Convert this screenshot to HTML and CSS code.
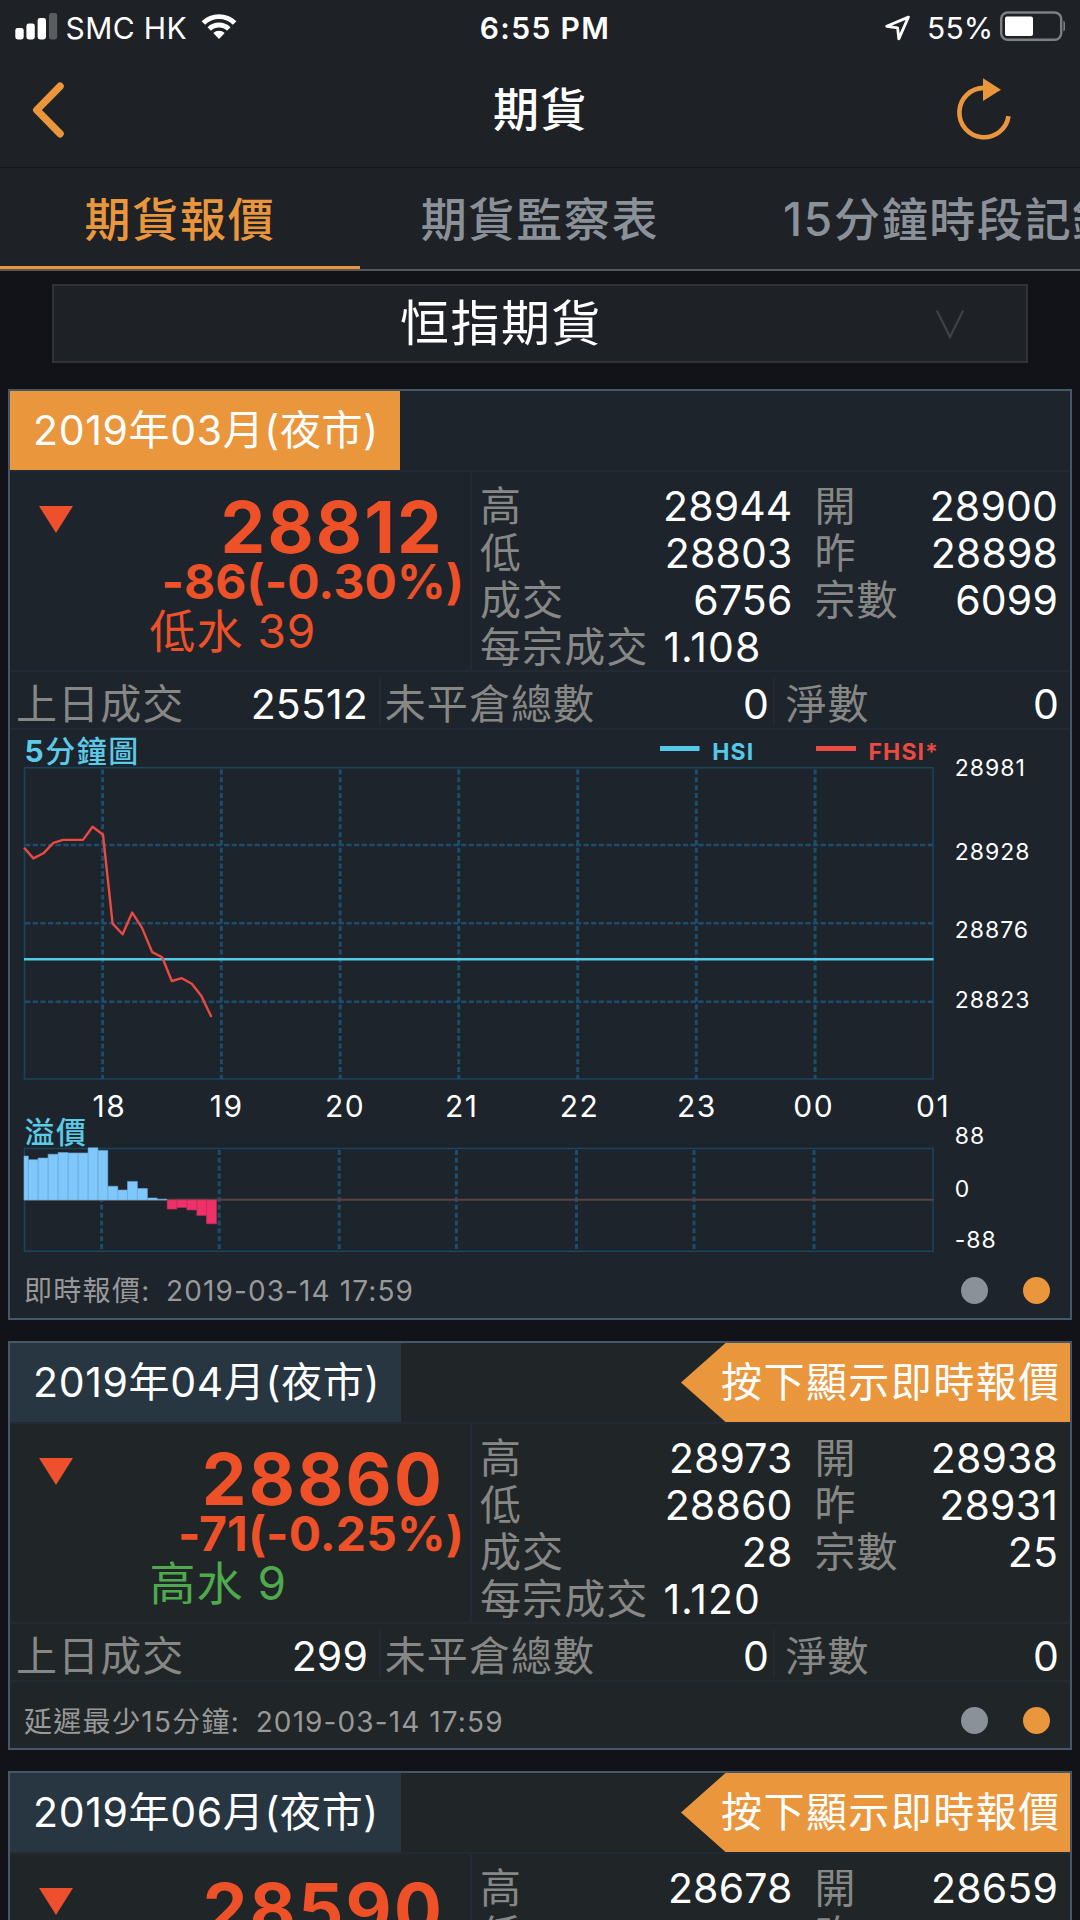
FILE: index.html
```
<!DOCTYPE html>
<html lang="zh-HK">
<head>
<meta charset="utf-8">
<title>期貨</title>
<link rel="stylesheet" href="styles.css">
</head>
<body>
<header class="top">
  <div class="status">
    <div class="status-left">
      <svg class="signal" width="43" height="27" viewBox="0 0 43 27"><rect x="0.3" y="15" width="8.4" height="11.5" rx="2.4"/><rect x="11.4" y="10.6" width="8.4" height="15.9" rx="2.4"/><rect x="22.6" y="5" width="8.4" height="21.5" rx="2.4"/><rect class="off" x="34" y="0" width="8.2" height="26.5" rx="2.4"/></svg>
      <span class="carrier">SMC HK</span>
      <svg class="wifi" width="36" height="27" viewBox="0 0 36 27"><path d="M0.6 8.3a25 25 0 0 1 34.8 0l-3.5 3.5a19.8 19.8 0 0 0-27.8 0z"/><path d="M6.5 14.2a16.600 16.600 0 0 1 23 0l-3.500 3.500a11.400 11.400 0 0 0-16 0z"/><path d="M12.300 20.100a8.200 8.200 0 0 1 11.400 0L18 25.900z"/></svg>
    </div>
    <div class="clock">6:55 PM</div>
    <div class="status-right">
      <svg class="locate" width="26" height="26" viewBox="0 0 26 26"><path d="M23.400 2.100 1.700 11.300 12.600 12.900 13.800 23.900z"/></svg>
      <span class="percent">55%</span>
      <svg class="battery" width="65" height="30" viewBox="0 0 65 30"><rect class="shell" x="1.200" y="1.500" width="60" height="27.300" rx="6.500"/><rect class="level" x="5" y="5.400" width="28" height="19.600" rx="2"/><path class="nub" d="M63.400 9.800c3.500 1.500 3.500 9.200 0 10.700z"/></svg>
    </div>
  </div>
  <div class="nav">
    <svg class="back" width="34" height="58" viewBox="0 0 34 58"><path d="M29 5.300 5.800 29 29 52.700"/></svg>
    <h1>期貨</h1>
    <svg class="refresh" width="56" height="64" viewBox="0 0 56 64"><path class="ring" d="M28 10.900a24.700 24.700 0 1 0 24.500 28.200"/><path class="head" d="M27 1.300v22.700l18-11.300z"/></svg>
  </div>
  <nav class="tabs">
    <a class="tab active">期貨報價</a>
    <a class="tab">期貨監察表</a>
    <a class="tab last">15分鐘時段記錄</a>
  </nav>
</header>

<div class="select">
  <span>恒指期貨</span>
  <svg width="30" height="30" viewBox="0 0 30 30"><path d="M1.800 1.500 15 28 28.200 1.500"/></svg>
</div>

<main>
  <section class="card live">
    <div class="card-head"><h2>2019年03月(夜市)</h2></div>
    <div class="quote">
      <div class="last-price">
        <svg class="down" width="34" height="27" viewBox="0 0 34 27"><path d="M0 0h34L17 27z"/></svg>
        <div class="figures"><div class="price">28812</div><div class="change">-86(-0.30%)</div><div class="basis">低水 39</div></div>
      </div>
      <dl class="stats">
        <div><dt>高</dt><dd>28944</dd></div><div><dt>開</dt><dd>28900</dd></div>
        <div><dt>低</dt><dd>28803</dd></div><div><dt>昨</dt><dd>28898</dd></div>
        <div><dt>成交</dt><dd>6756</dd></div><div><dt>宗數</dt><dd>6099</dd></div>
        <div class="inline"><dt>每宗成交</dt><dd>1.108</dd></div>
      </dl>
    </div>
    <dl class="totals">
      <div><dt>上日成交</dt><dd>25512</dd></div>
      <div><dt>未平倉總數</dt><dd>0</dd></div>
      <div><dt>淨數</dt><dd>0</dd></div>
    </dl>
    <svg class="chart" width="1060" height="532" viewBox="10 730 1060 532">
      <g class="frame"><rect x="24.500" y="767.700" width="908.500" height="311.300"/><rect x="24.500" y="1148.500" width="908.500" height="102.700"/></g>
      <g class="grid">
        <path d="M102.600 769.500V1079M221.400 769.500V1079M340.200 769.500V1079M458.700 769.500V1079M577.700 769.500V1079M696.300 769.500V1079M815.100 769.500V1079"/>
        <path class="across" d="M25 845H933M25 923.300H933M25 1001.700H933"/>
        <path d="M101.600 1150V1251M219.200 1150V1251M339.200 1150V1251M456.400 1150V1251M576.500 1150V1251M694 1150V1251M814 1150V1251"/>
      </g>
      <path class="zero" d="M24 1199.800H933.600"/>
      <g class="premium">
        <path d="M24 1156.100h4.300V1200H24zM28.300 1159.700h9.800V1200h-9.800zM38.100 1158.100h10V1200h-10zM48.100 1154.200h10V1200h-10zM58.100 1152.600h10V1200h-10zM68.100 1153h10V1200h-10zM78.100 1153h10V1200h-10zM88.100 1147.800h9.800V1200h-9.800zM97.900 1150.600h9.900V1200h-9.900zM107.800 1186.200h10V1200h-10zM117.800 1190.100h9.700V1200h-9.700zM127.500 1181.400h9.900V1200h-9.900zM137.400 1188.600h10V1200h-10zM147.400 1198h9.800v2h-9.800zM157.200 1199.200h9.800v.8h-9.800z"/>
        <path class="neg" d="M167.200 1200h9.700v9.100h-9.700zM176.900 1200h10v7.500h-10zM186.900 1200h9.900v9.900h-9.900zM196.800 1200h9.700v15.400h-9.700zM206.500 1200h10v23.800h-10z"/>
      </g>
      <path class="hsi" d="M24 959.300H933.600"/>
      <polyline class="fhsi" points="24.100,847.700 33.400,858.400 43.400,853.300 53.400,842.800 63,839.900 83,839.900 92.600,826.800 103,834.700 112.600,923.600 122.600,934.300 132.200,912.600 141.900,927.600 152.200,952.100 162.200,957.200 171.800,981 181.800,978.200 191.800,983.700 201.400,996 211.400,1017"/>
      <g class="caption"><text x="24.500" y="762.300"><tspan class="num">5</tspan>分鐘圖</text><text x="24.500" y="1142.500">溢價</text></g>
      <rect class="hsi-key" x="660" y="746" width="39.500" height="5"/><text class="hsi-name" x="712.300" y="760">HSI</text>
      <rect class="fhsi-key" x="816" y="746" width="40" height="5"/><text class="fhsi-name" x="868.500" y="760">FHSI*</text>
      <g class="hours"><text x="92.500" y="1117.300">18</text><text x="209.700" y="1117.300">19</text><text x="325" y="1117.300">20</text><text x="445" y="1117.300">21</text><text x="559.700" y="1117.300">22</text><text x="677" y="1117.300">23</text><text x="793.300" y="1117.300">00</text><text x="916" y="1117.300">01</text></g>
      <g class="levels"><text x="954.700" y="775.800">28981</text><text x="954.700" y="859.500">28928</text><text x="954.700" y="937.600">28876</text><text x="954.700" y="1007.800">28823</text><text x="954.700" y="1143.900">88</text><text x="954.700" y="1196.800">0</text><text x="954.700" y="1247.900">-88</text></g>
    </svg>
    <footer class="card-foot"><span class="mode">即時報價:</span><time>2019-03-14 17:59</time><i class="dot grey"></i><i class="dot"></i></footer>
  </section>

  <section class="card">
    <div class="card-head"><h2>2019年04月(夜市)</h2><a class="reveal">按下顯示即時報價</a></div>
    <div class="quote">
      <div class="last-price">
        <svg class="down" width="34" height="27" viewBox="0 0 34 27"><path d="M0 0h34L17 27z"/></svg>
        <div class="figures"><div class="price">28860</div><div class="change">-71(-0.25%)</div><div class="basis up">高水 9</div></div>
      </div>
      <dl class="stats">
        <div><dt>高</dt><dd>28973</dd></div><div><dt>開</dt><dd>28938</dd></div>
        <div><dt>低</dt><dd>28860</dd></div><div><dt>昨</dt><dd>28931</dd></div>
        <div><dt>成交</dt><dd>28</dd></div><div><dt>宗數</dt><dd>25</dd></div>
        <div class="inline"><dt>每宗成交</dt><dd>1.120</dd></div>
      </dl>
    </div>
    <dl class="totals">
      <div><dt>上日成交</dt><dd>299</dd></div>
      <div><dt>未平倉總數</dt><dd>0</dd></div>
      <div><dt>淨數</dt><dd>0</dd></div>
    </dl>
    <footer class="card-foot tall"><span class="mode">延遲最少15分鐘:</span><time>2019-03-14 17:59</time><i class="dot grey"></i><i class="dot"></i></footer>
  </section>

  <section class="card">
    <div class="card-head"><h2>2019年06月(夜市)</h2><a class="reveal">按下顯示即時報價</a></div>
    <div class="quote">
      <div class="last-price">
        <svg class="down" width="34" height="27" viewBox="0 0 34 27"><path d="M0 0h34L17 27z"/></svg>
        <div class="figures"><div class="price">28590</div></div>
      </div>
      <dl class="stats">
        <div><dt>高</dt><dd>28678</dd></div><div><dt>開</dt><dd>28659</dd></div>
        <div><dt>低</dt></div><div><dt>昨</dt></div>
      </dl>
    </div>
  </section>
</main>
</body>
</html>
```
FILE: styles.css
```
* { box-sizing: border-box; }
html, body { height: 1920px; overflow: hidden; }
body {
  display: flex;
  flex-direction: column;
  margin: 0;
  width: 1080px;
  background: #121318;
  color: #fff;
  font-family: Inter, "Noto Sans CJK TC", sans-serif;
  font-weight: 400;
}
h1, h2, dl, dt, dd { margin: 0; font-weight: inherit; }
svg { display: block; flex: none; }

.top { background: #1e2125; flex: none; }

.status {
  display: grid;
  grid-template-columns: 1fr auto 1fr;
  height: 55px;
  align-items: center;
  font-size: 30px;
  line-height: 38px;
}
.status-left, .status-right { display: flex; align-items: center; }
.status-left { padding-left: 15px; }
.signal { fill: #fff; margin-bottom: 2px; }
.signal .off { fill: #5a5c60; }
.carrier { margin-left: 7.500px; letter-spacing: 0.400px; }
.wifi { fill: #fff; margin-left: 14px; margin-bottom: 3px; }
.clock { font-weight: 600; letter-spacing: 1.350px; padding-left: 10px; }
.status-right { justify-content: flex-end; padding-right: 15px; }
.locate { fill: none; stroke: #fff; stroke-width: 2.800; stroke-linejoin: round; }
.percent { margin-left: 16px; letter-spacing: 0.200px; }
.battery { margin-left: 6.500px; margin-bottom: 3px; }
.shell { fill: none; stroke: #7d7f82; stroke-width: 2.400; }
.level { fill: #fff; }
.nub { fill: #7d7f82; }

.nav {
  display: flex;
  align-items: center;
  justify-content: space-between;
  height: 113px;
  padding: 0 68px 5px 31px;
  border-bottom: 1px solid #14161a;
}
.back { fill: none; stroke: #ea963d; stroke-width: 7.500; stroke-linecap: round; stroke-linejoin: round; margin-top: 2px; }
.nav h1 { font-size: 46px; line-height: 60px; font-weight: 500; letter-spacing: 1.500px; margin-left: 60px; }
.refresh { margin-top: 1px; }
.ring { fill: none; stroke: #ea963d; stroke-width: 4.600; }
.head { fill: #ea963d; }

.tabs {
  display: flex;
  height: 103px;
  border-bottom: 2px solid #55575a;
  overflow: hidden;
  white-space: nowrap;
}
.tab {
  flex: 0 0 360px;
  padding-top: 2px;
  text-align: center;
  font-size: 46px;
  line-height: 99px;
  font-weight: 500;
  letter-spacing: 1.700px;
  color: #8b9199;
}
.tab.active { color: #ea963d; border-bottom: 3px solid #ea963d; }
.tab.last { text-align: left; padding-left: 63px; }

.select {
  display: flex;
  flex: none;
  align-items: center;
  justify-content: flex-end;
  width: 976px;
  height: 79px;
  margin: 13px auto 26px;
  padding-right: 61px;
  border: 2px solid #303236;
  background: #1e2125;
}
.select span { flex: 1; padding: 1px 0 0 13px; text-align: center; font-size: 49px; line-height: 74px; letter-spacing: 1.500px; }
.select svg { fill: none; stroke: #404246; stroke-width: 2.200; }

main { display: flex; flex-direction: column; flex: 1; min-height: 0; overflow: hidden; gap: 21px; padding: 0 8px; }
.card { flex: none; border: 2px solid #465868; background: #202527; font-size: 41px; line-height: 47px; }
.card.live { background: #1d242b; }

.card-head { display: flex; justify-content: space-between; height: 79px; line-height: 79px; }
.card-head h2 { font-size: 41px; width: 391px; padding-left: 23px; background: #283641; letter-spacing: 0.650px; white-space: nowrap; }
.live h2 { width: 390px; background: #ea963d; }
.reveal {
  width: 389px;
  padding-left: 40px;
  background: #ea963d;
  letter-spacing: 1.450px;
  white-space: nowrap;
  clip-path: polygon(0 50%, 44.500px 0, 100% 0, 100% 100%, 44.500px 100%);
}

.quote { display: flex; height: 200px; border-top: 2px solid #222a35; }
.last-price { display: flex; width: 460px; padding: 26px 6px 0 28.500px; color: #ee5128; }
.down { margin-top: 8px; fill: #ee502d; }
.figures { flex: 1; text-align: right; white-space: nowrap; }
.price { font-size: 71px; line-height: 58px; font-weight: 700; letter-spacing: 2.200px; padding-right: 20px; }
.change { font-size: 48px; line-height: 51px; font-weight: 700; letter-spacing: 0.100px; }
.basis { font-size: 46px; line-height: 49px; letter-spacing: 1px; text-align: left; padding-left: 77px; }
.basis.up { color: #4fa94d; }

.stats {
  display: grid;
  grid-template-columns: 312.500px 243.500px;
  grid-auto-rows: 47px;
  column-gap: 22px;
  align-content: start;
  flex: 1;
  padding: 10.500px 0 0 8px;
  border-left: 2px solid #222a35;
}
.stats > div, .totals > div { display: flex; justify-content: space-between; white-space: nowrap; }
.stats .inline { justify-content: flex-start; gap: 15px; }
.stats .inline dd { letter-spacing: 1px; }
dt { color: #878786; letter-spacing: 1.100px; }
dd { letter-spacing: 0.150px; }

.totals { display: flex; height: 60px; padding: 6px 0 3px; border: 2px solid #222a35; border-width: 2px 0; }
.totals > div { height: 47px; line-height: 52px; }
.totals > div:nth-child(1) { width: 369px; padding: 0 11px 0 6px; }
.totals > div:nth-child(2) { width: 394px; padding: 0 4px 0 3.700px; border-left: 2px solid #222a35; }
.totals > div:nth-child(3) { flex: 1; padding: 0 11px 0 10.500px; border-left: 2px solid #222a35; }

.frame rect { fill: none; stroke: #1a435d; stroke-width: 1.600; }
.grid path { fill: none; stroke: #1d4d6e; stroke-width: 3; stroke-dasharray: 5 2.830; }
.grid .across { stroke-width: 2.400; stroke-dasharray: 5.400 2.250; }
.zero { stroke: #5a4240; stroke-width: 2; }
.premium path { fill: #80c8fb; stroke: #6aaad8; stroke-width: 0.600; }
.premium .neg { fill: #ee3168; stroke: #c02c5c; }
.hsi { stroke: #54cae8; stroke-width: 2.600; }
.fhsi { fill: none; stroke: #ea4a42; stroke-width: 2.400; stroke-linejoin: round; }
.caption { font-size: 30px; font-weight: 500; fill: #5bcbe8; letter-spacing: 1.500px; }
.num { font-weight: 700; }
.hsi-key, .hsi-name { fill: #54cae8; }
.fhsi-key, .fhsi-name { fill: #ea4a42; }
.hsi-name, .fhsi-name { font-size: 23px; font-weight: 700; letter-spacing: 1.100px; }
.hours { font-size: 30px; fill: #fff; letter-spacing: 1.500px; }
.levels { font-size: 23px; fill: #fff; letter-spacing: 1px; }

.card-foot { display: flex; align-items: center; height: 56px; padding: 2px 20px 0 14px; font-size: 28px; line-height: 40px; color: #999; }
.card-foot.tall { height: 66px; padding-top: 13px; }
.mode { letter-spacing: 1.300px; margin-right: 15.500px; }
.card-foot time { letter-spacing: 1.100px; }
.dot { width: 27px; height: 27px; border-radius: 50%; background: #ea963d; margin-left: 35px; margin-bottom: 2px; }
.dot.grey { background: #8b9199; margin-left: auto; }
```
